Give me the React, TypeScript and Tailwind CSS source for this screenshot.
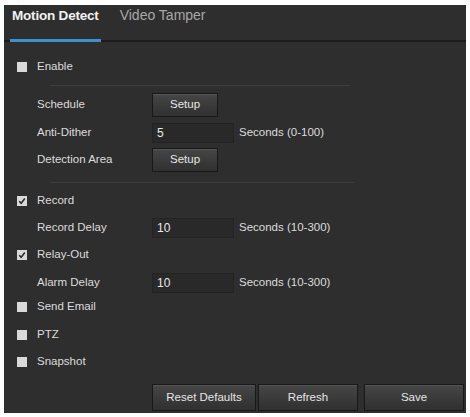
import React from "react";

const font = { fontFamily: '"Liberation Sans", Arial, sans-serif' };

function Check({ checked }: { checked?: boolean }) {
  return (
    <div className="w-[10px] h-[10px] bg-[#d9d9d9] flex items-center justify-center shrink-0">
      {checked && (
        <svg width="8" height="8" viewBox="0 0 8 8">
          <path d="M1.2 4.2 L3.2 6.2 L6.8 1.6" stroke="#2a2a2a" strokeWidth="1.6" fill="none" />
        </svg>
      )}
    </div>
  );
}

function CheckRow({ label, checked, mt }: { label: string; checked?: boolean; mt: string }) {
  return (
    <div className={`flex items-center h-[20px] pl-[13px] ${mt}`}>
      <Check checked={checked} />
      <span className="ml-[10px] text-[11.5px] text-[#dcdcdc]">{label}</span>
    </div>
  );
}

function Btn({ label, w }: { label: string; w: string }) {
  return (
    <button
      className={`${w} h-full text-[11.5px] text-[#e6e6e6] bg-gradient-to-b from-[#464646] to-[#303030] border border-[#181818] shadow-[inset_0_1px_0_#555555]`}
    >
      {label}
    </button>
  );
}

function Input({ value }: { value: string }) {
  return (
    <div className="w-[82px] h-full bg-[#292929] border border-[#232323] flex items-center pl-[4px] text-[12px] text-[#e8e8e8]">
      {value}
    </div>
  );
}

function SubRow({ label, mt, h, children }: { label: string; mt: string; h: string; children: React.ReactNode }) {
  return (
    <div className={`flex items-center ${h} ${mt}`}>
      <span className="w-[148px] pl-[33px] shrink-0 text-[11.5px] text-[#dcdcdc]">{label}</span>
      <div className="flex items-center h-full">{children}</div>
    </div>
  );
}

export default function App() {
  return (
    <div className="w-[470px] h-[417px] bg-white overflow-hidden" style={font}>
      <div className="ml-[4px] mt-[5px] w-[462px] h-[408px] bg-[#2e2e2e] flex flex-col">
        <div className="flex h-[37px] border-b-2 border-[#1c1c1c] items-stretch">
          <div className="ml-[6px] px-[2px] flex items-center border-b-[3px] border-[#3f8fd0] -mb-[2px] text-[13.5px] font-bold text-[#f2f2f2] pb-[12px] tracking-[-0.2px]">
            Motion Detect
          </div>
          <div className="ml-[19px] flex items-center text-[14px] text-[#a8a8a8] pb-[14px]">Video Tamper</div>
        </div>

        <CheckRow label="Enable" mt="mt-[15px]" />
        <div className="mt-[8px] ml-[46px] w-[300px] h-px bg-[#3c3c3c]" />

        <SubRow label="Schedule" mt="mt-[7px]" h="h-[24px]">
          <Btn label="Setup" w="w-[66px]" />
        </SubRow>
        <SubRow label="Anti-Dither" mt="mt-[6px]" h="h-[20px]">
          <Input value="5" />
          <span className="ml-[5px] text-[11.5px] text-[#dcdcdc]">Seconds (0-100)</span>
        </SubRow>
        <SubRow label="Detection Area" mt="mt-[5px]" h="h-[24px]">
          <Btn label="Setup" w="w-[66px]" />
        </SubRow>
        <div className="mt-[10px] ml-[46px] w-[304px] h-px bg-[#3c3c3c]" />

        <CheckRow label="Record" checked mt="mt-[8px]" />
        <SubRow label="Record Delay" mt="mt-[7px]" h="h-[20px]">
          <Input value="10" />
          <span className="ml-[5px] text-[11.5px] text-[#dcdcdc]">Seconds (10-300)</span>
        </SubRow>
        <CheckRow label="Relay-Out" checked mt="mt-[7px]" />
        <SubRow label="Alarm Delay" mt="mt-[8px]" h="h-[20px]">
          <Input value="10" />
          <span className="ml-[5px] text-[11.5px] text-[#dcdcdc]">Seconds (10-300)</span>
        </SubRow>
        <CheckRow label="Send Email" mt="mt-[4px]" />
        <CheckRow label="PTZ" mt="mt-[8px]" />
        <CheckRow label="Snapshot" mt="mt-[7px]" />

        <div className="mt-[12px] h-[27px] flex pl-[148px]">
          <Btn label="Reset Defaults" w="w-[104px]" />
          <div className="w-[2px]" />
          <Btn label="Refresh" w="w-[100px]" />
          <div className="w-[6px]" />
          <Btn label="Save" w="w-[100px]" />
        </div>
      </div>
    </div>
  );
}
